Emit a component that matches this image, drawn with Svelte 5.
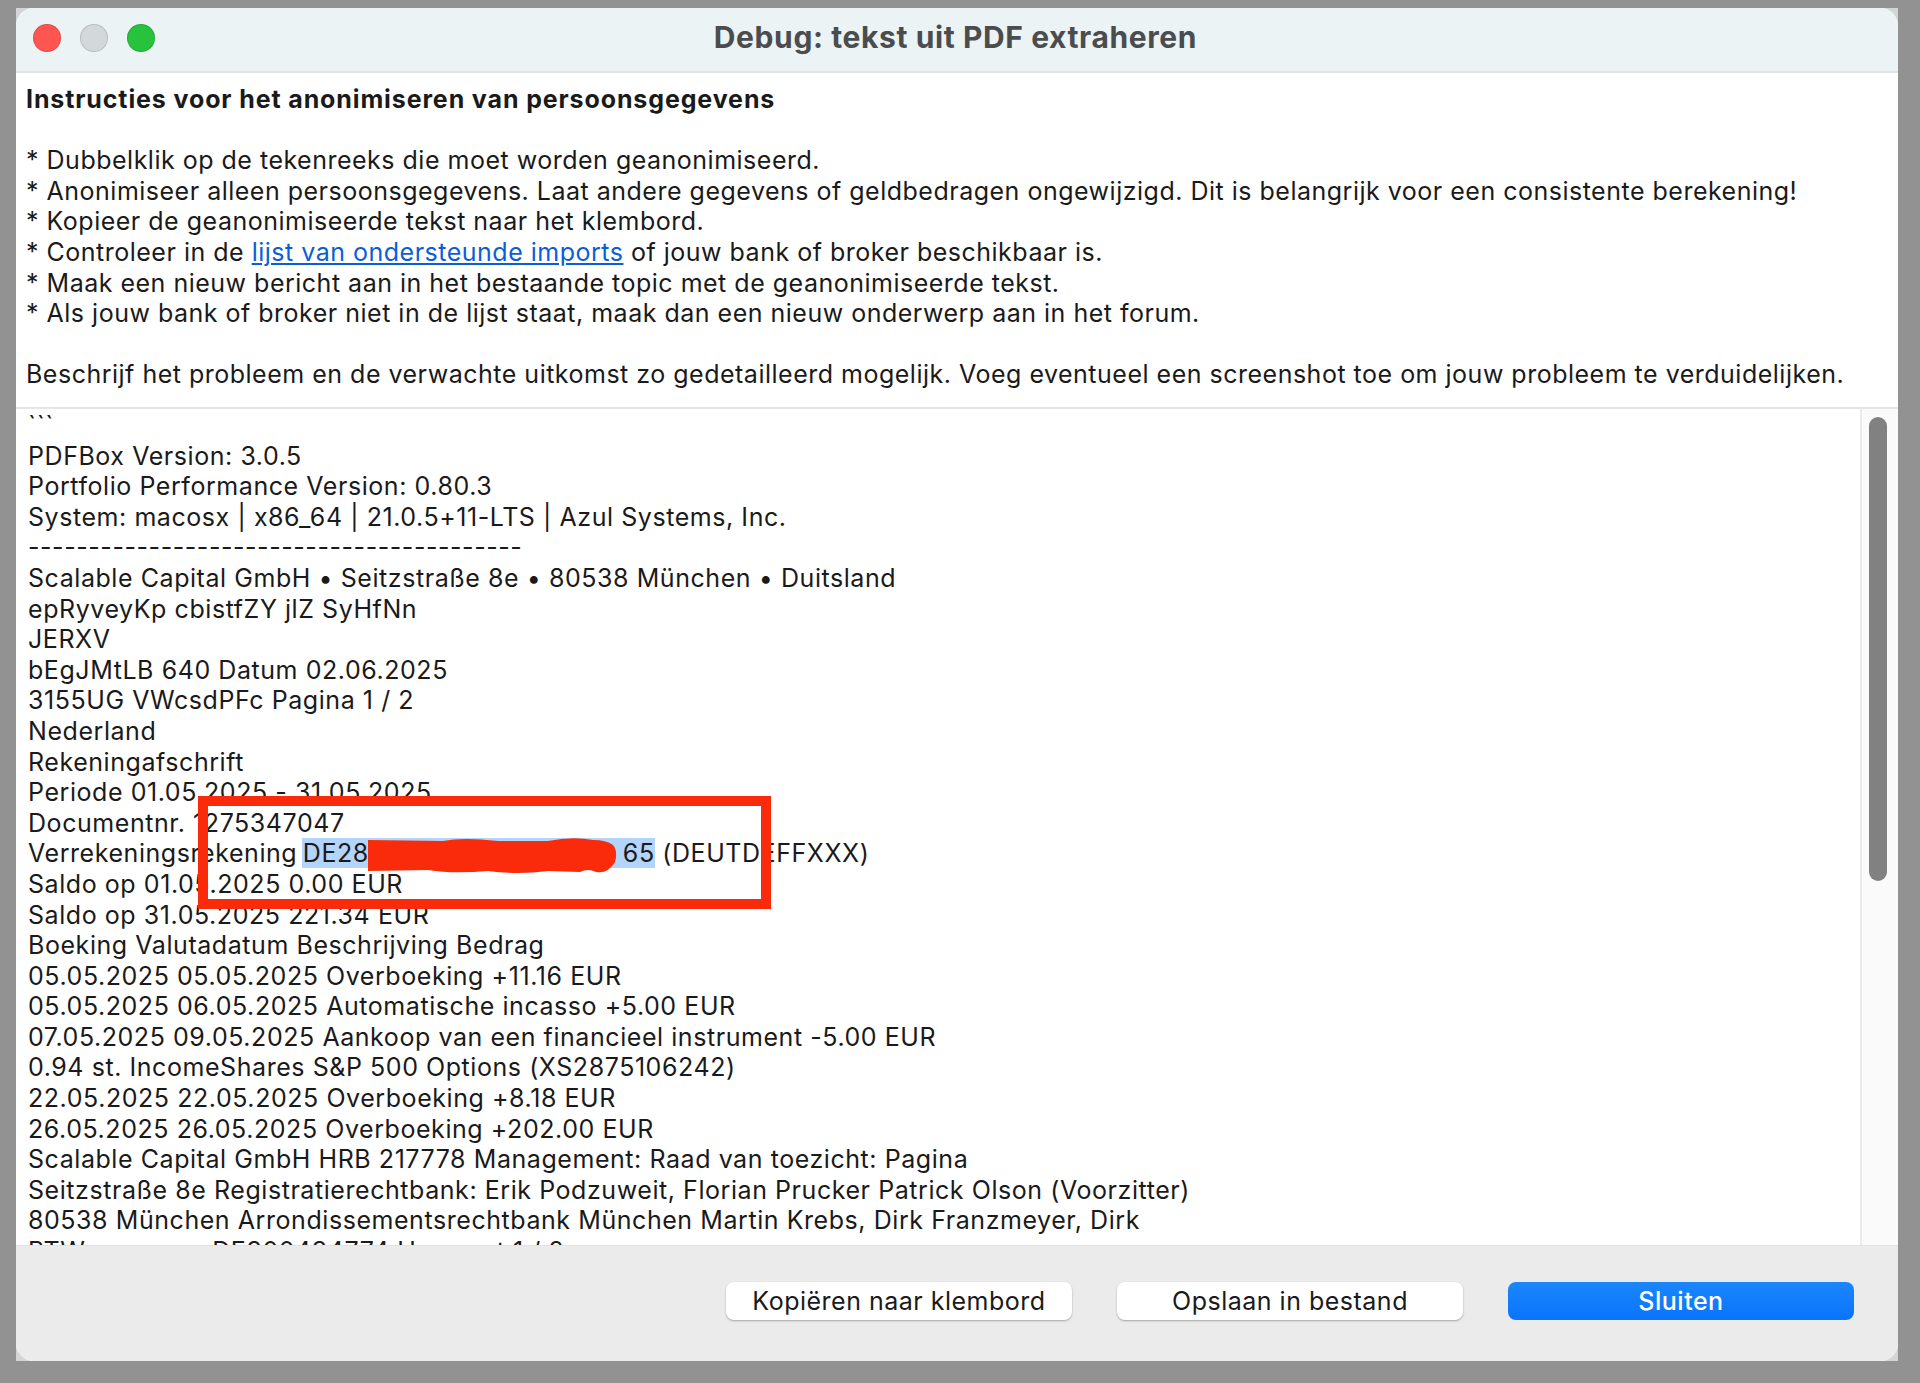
<script>
  const instructions = [
    'Dubbelklik op de tekenreeks die moet worden geanonimiseerd.',
    'Anonimiseer alleen persoonsgegevens. Laat andere gegevens of geldbedragen ongewijzigd. Dit is belangrijk voor een consistente berekening!',
    'Kopieer de geanonimiseerde tekst naar het klembord.'
  ];
  const instructions2 = [
    'Maak een nieuw bericht aan in het bestaande topic met de geanonimiseerde tekst.',
    'Als jouw bank of broker niet in de lijst staat, maak dan een nieuw onderwerp aan in het forum.'
  ];
  const before = [
    '```',
    'PDFBox Version: 3.0.5',
    'Portfolio Performance Version: 0.80.3',
    'System: macosx | x86_64 | 21.0.5+11-LTS | Azul Systems, Inc.',
    '-----------------------------------------',
    'Scalable Capital GmbH • Seitzstraße 8e • 80538 München • Duitsland',
    'epRyveyKp cbistfZY jlZ SyHfNn',
    'JERXV',
    'bEgJMtLB 640 Datum 02.06.2025',
    '3155UG VWcsdPFc Pagina 1 / 2',
    'Nederland',
    'Rekeningafschrift',
    'Periode 01.05.2025 - 31.05.2025',
    'Documentnr. 1275347047'
  ];
  const after = [
    'Saldo op 01.05.2025 0.00 EUR',
    'Saldo op 31.05.2025 221.34 EUR',
    'Boeking Valutadatum Beschrijving Bedrag',
    '05.05.2025 05.05.2025 Overboeking +11.16 EUR',
    '05.05.2025 06.05.2025 Automatische incasso +5.00 EUR',
    '07.05.2025 09.05.2025 Aankoop van een financieel instrument -5.00 EUR',
    '0.94 st. IncomeShares S&P 500 Options (XS2875106242)',
    '22.05.2025 22.05.2025 Overboeking +8.18 EUR',
    '26.05.2025 26.05.2025 Overboeking +202.00 EUR',
    'Scalable Capital GmbH HRB 217778 Management: Raad van toezicht: Pagina',
    'Seitzstraße 8e Registratierechtbank: Erik Podzuweit, Florian Prucker Patrick Olson (Voorzitter)',
    '80538 München Arrondissementsrechtbank München Martin Krebs, Dirk Franzmeyer, Dirk',
    'BTW-nummer: DE300434774 Uw maat 1 / 2'
  ];
</script>

<div class="screen">
  <div class="frame">
    <div class="window">
      <header class="titlebar">
        <div class="lights">
          <span class="light red"></span>
          <span class="light grey"></span>
          <span class="light green"></span>
        </div>
        <h1>Debug: tekst uit PDF extraheren</h1>
      </header>

      <section class="intro">
        <p class="heading">Instructies voor het anonimiseren van persoonsgegevens</p>
        <p class="blank"></p>
        {#each instructions as line}<p>* {line}</p>{/each}
        <p>* Controleer in de <a href="#imports">lijst van ondersteunde imports</a> of jouw bank of broker beschikbaar is.</p>
        {#each instructions2 as line}<p>* {line}</p>{/each}
        <p class="blank"></p>
        <p>Beschrijf het probleem en de verwachte uitkomst zo gedetailleerd mogelijk. Voeg eventueel een screenshot toe om jouw probleem te verduidelijken.</p>
      </section>

      <section class="log">
        <div class="logtext">
          {#each before as line}<p>{line}</p>{/each}
          <p>Verrekeningsrekening <mark>DE28<span class="hidden"></span>65</mark> (DEUTDEFFXXX)</p>
          {#each after as line}<p>{line}</p>{/each}
        </div>
        <div class="track"><div class="thumb"></div></div>
      </section>

      <footer class="actions">
        <button>Kopiëren naar klembord</button>
        <button>Opslaan in bestand</button>
        <button class="primary">Sluiten</button>
      </footer>
    </div>
  </div>

  <div class="callout"></div>
  <svg class="scribble" width="262" height="38" viewBox="0 0 262 38">
    <path d="M0 3 L75 4 Q95 0 130 4 L180 4 Q205 -1 225 3 Q238 3 245 8 Q250 14 247 25 Q240 37 228 35 Q220 31 212 35 L180 34 Q150 38 120 34 Q85 37 60 33 L0 34 Z" fill="#f92b0a"/>
  </svg>
</div>

<style>
  :global(body) { margin: 0; }
  .screen {
    position: relative;
    width: 1920px;
    height: 1383px;
    box-sizing: border-box;
    padding: 8px 22px 22px 16px;
    background: #929292;
    overflow: hidden;
    font-family: Inter, "Liberation Sans", sans-serif;
    color: #1a1a1a;
  }
  .frame {
    height: 100%;
    background: #d4d6d6;
  }
  .window {
    display: flex;
    flex-direction: column;
    height: 100%;
    border-radius: 18px;
    overflow: hidden;
    background: #fff;
  }
  p { margin: 0; white-space: nowrap; }
  .titlebar {
    position: relative;
    flex: 0 0 65px;
    box-sizing: border-box;
    display: flex;
    align-items: center;
    justify-content: center;
    background: #ecf3f5;
    border-bottom: 2px solid #dfe5e7;
  }
  h1 {
    margin: -5px 0 0 -3px;
    font-size: 30px;
    font-weight: 700;
    letter-spacing: .6px;
    color: #4a4c4e;
  }
  .lights {
    position: absolute;
    left: 17px;
    top: 16px;
    display: flex;
    gap: 19px;
  }
  .light {
    width: 28px;
    height: 28px;
    border-radius: 50%;
    box-sizing: border-box;
    border: 1px solid rgba(0, 0, 0, .12);
  }
  .red { background: #ff5652; }
  .grey { background: #d3d8da; }
  .green { background: #27c33c; }

  .intro {
    flex: 0 0 auto;
    height: 336px;
    box-sizing: border-box;
    padding: 11px 10px 0 10px;
    font-size: 25px;
    line-height: 30.6px;
    letter-spacing: .5px;
    border-bottom: 2px solid #e6e6e6;
  }
  .heading { font-weight: 700; letter-spacing: .88px; }
  .blank { height: 30.6px; }
  a { color: #0b5ed7; }

  .log {
    flex: 1;
    min-height: 0;
    display: flex;
    overflow: hidden;
  }
  .logtext {
    flex: 1;
    min-width: 0;
    padding: 0 0 0 12px;
    overflow: hidden;
    font-size: 25px;
    line-height: 30.6px;
    letter-spacing: .56px;
    margin-top: 1px;
  }
  mark {
    margin-left: -3px;
    padding-left: 1px;
    background: #b3d4fb;
    color: inherit;
  }
  .hidden {
    display: inline-block;
    width: 254px;
  }
  .track {
    flex: 0 0 38px;
    box-sizing: border-box;
    padding-top: 8px;
    background: #fafafa;
    border-left: 2px solid #ebebeb;
  }
  .thumb {
    width: 18px;
    height: 464px;
    margin-left: 7px;
    border-radius: 9px;
    background: #818181;
  }

  .actions {
    flex: 0 0 116px;
    box-sizing: border-box;
    display: flex;
    align-items: flex-start;
    justify-content: flex-end;
    gap: 45px;
    padding: 36px 44px 0 0;
    background: #ebebeb;
    border-top: 1px solid #e2e2e2;
  }
  button {
    width: 346px;
    height: 38px;
    padding: 0;
    border: 0;
    border-radius: 8px;
    background: #fff;
    box-shadow: 0 1px 2px rgba(0, 0, 0, .3);
    font: 25px Inter, "Liberation Sans", sans-serif;
    letter-spacing: .5px;
    color: #1a1a1a;
  }
  .primary {
    background: linear-gradient(#1b87fb, #0a74fb);
    color: #fff;
    font-weight: 500;
    box-shadow: none;
  }
  .callout {
    position: absolute;
    left: 198px;
    top: 796px;
    width: 573px;
    height: 113px;
    box-sizing: border-box;
    border: 10px solid #f92b0a;
  }
  .scribble {
    position: absolute;
    left: 368px;
    top: 837px;
  }
</style>
